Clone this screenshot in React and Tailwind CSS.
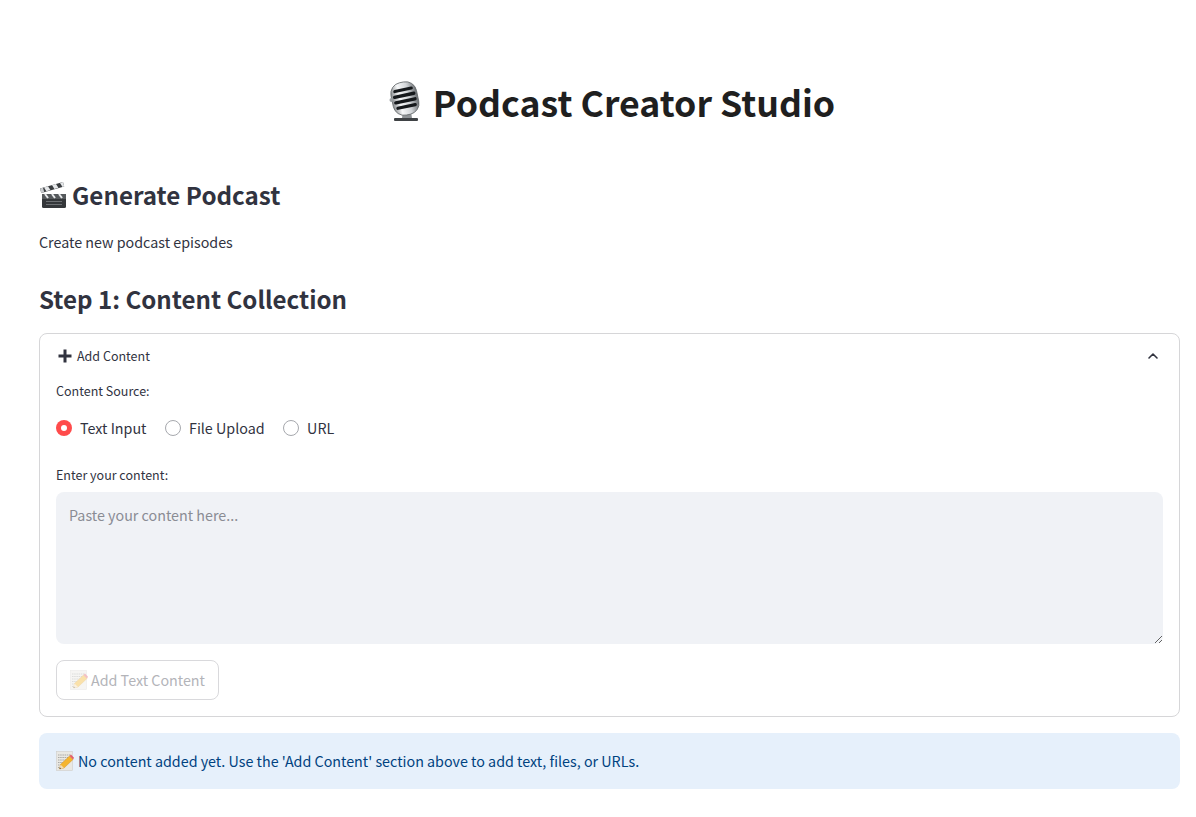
import React from 'react';
import { ChevronUp } from 'lucide-react';

const font = { fontFamily: '"Noto Sans CJK SC", "Noto Sans", sans-serif' };

const MicIcon = () => (
  <svg width="32" height="42" viewBox="0 0 32 42" className="shrink-0">
    <defs>
      <linearGradient id="micBody" x1="0" y1="0" x2="1" y2="0">
        <stop offset="0" stopColor="#8a8d90" />
        <stop offset="0.3" stopColor="#f7f8f9" />
        <stop offset="0.65" stopColor="#d2d5d8" />
        <stop offset="1" stopColor="#6a6e72" />
      </linearGradient>
    </defs>
    <rect x="5" y="37" width="24" height="3" rx="1" fill="#3f4245" />
    <path d="M14 31h8l1 6H13Z" fill="#8f9396" />
    <g transform="rotate(-12 16 18)">
      <rect x="3" y="1" width="26" height="33" rx="11" fill="url(#micBody)" stroke="#64686b" strokeWidth="0.8" />
      <rect x="6" y="7" width="20" height="3.2" rx="1.6" fill="#15181b" />
      <rect x="4.5" y="12.5" width="23" height="3.4" rx="1.7" fill="#15181b" />
      <rect x="4.5" y="18.2" width="23" height="3.4" rx="1.7" fill="#15181b" />
      <rect x="5.5" y="24" width="21" height="3.2" rx="1.6" fill="#15181b" />
    </g>
    <circle cx="2.5" cy="19" r="2" fill="#9a9ea1" />
  </svg>
);

const ClapperIcon = () => (
  <svg width="28" height="28" viewBox="0 0 28 28" className="shrink-0">
    <rect x="3" y="13" width="24" height="14" rx="1.5" fill="#34373a" />
    <rect x="3" y="13" width="24" height="5" fill="#55595c" />
    <path d="M7 20.5h16M7 23.5h16" stroke="#6d7073" strokeWidth="1" />
    <path d="M1 7.5 24 1l1.2 4.4L2.3 12Z" fill="#3a3d40" />
    <path d="M5 6.4 9 5.2l2.4 3.8-4 1.2ZM13 4.1l4-1.1 2.4 3.8-4 1.1ZM21 1.9l3-.9 1.2 4.4-1.7.5Z" fill="#e6e8ea" />
    <path d="M1 7.5 2.3 12l3-.8L4 6.7Z" fill="#c9cccf" />
    <path d="M6 13l3 4M13 13l3 4M20 13l3 4" stroke="#e6e8ea" strokeWidth="2" />
  </svg>
);

const MemoIcon = ({ className }) => (
  <svg width="18" height="20" viewBox="0 0 18 20" className={`shrink-0 ${className || ''}`}>
    <rect x="0.5" y="0.5" width="16" height="19" fill="#e9e8e3" stroke="#cfcec8" strokeWidth="0.6" />
    <path d="M2 4h13M2 6.5h13M2 9h9M2 11.5h6M2 14h4M2 16.5h2" stroke="#a9a9a6" strokeWidth="1" strokeDasharray="1.5 0.7" />
    <path d="M3.5 18 4.5 13.5 13.5 5 17 8.5 8 17Z" fill="#f5b52e" stroke="#c98a18" strokeWidth="0.4" />
    <path d="M13.5 5 15 3.5 18 6.8 17 8.5Z" fill="#e2606a" />
    <path d="M3.5 18 4.5 13.5 8 17Z" fill="#f3dcb4" />
    <path d="M3.5 18 3.9 16.4 5.1 17.6Z" fill="#333" />
  </svg>
);

const Radio = ({ label, checked }) => (
  <label className="flex items-center gap-2 text-[14.3px] text-[#31333f] leading-6">
    {checked ? (
      <span className="w-4 h-4 rounded-full bg-[#ff4b4b] flex items-center justify-center">
        <span className="w-1.5 h-1.5 rounded-full bg-white" />
      </span>
    ) : (
      <span className="w-4 h-4 rounded-full border border-[#a6a8ad] bg-white" />
    )}
    {label}
  </label>
);

export default function App() {
  return (
    <div className="min-h-screen bg-white pl-[39px] pr-4 pt-[75px] text-[#31333f]" style={font}>
      <h1 className="flex items-center justify-center gap-[12px] pl-[5px] text-[35.7px] leading-[54px] font-bold text-[#1f1f1f] h-[54px]">
        <MicIcon />
        Podcast Creator Studio
      </h1>

      <h2 className="flex items-center gap-[5px] mt-[48px] text-[24.2px] leading-9 font-semibold">
        <ClapperIcon />
        Generate Podcast
      </h2>
      <p className="mt-[17px] text-[14.3px] leading-6">Create new podcast episodes</p>
      <h3 className="mt-[27px] text-[24.1px] leading-9 font-semibold">Step 1: Content Collection</h3>

      <section className="mt-[16px] border border-[#d6d6d8] rounded-lg h-[384px] px-4">
        <div className="flex items-center justify-between h-11 pl-0.5 pr-0.5">
          <span className="flex items-center gap-[5px] text-[12.5px]">
            <svg width="14" height="14" viewBox="0 0 14 14" className="text-[#31333f]">
              <path d="M7 0.5v13M0.5 7h13" stroke="currentColor" strokeWidth="3" />
            </svg>
            Add Content
          </span>
          <ChevronUp size={16} strokeWidth={2.4} />
        </div>
        <p className="text-[12.5px] leading-[26px]">Content Source:</p>
        <div className="flex gap-[18.5px] mt-[12px]">
          <Radio label="Text Input" checked />
          <Radio label="File Upload" />
          <Radio label="URL" />
        </div>
        <p className="mt-[22px] text-[12.5px] leading-[26px]">Enter your content:</p>
        <textarea
          placeholder="Paste your content here..."
          className="block w-full h-[152px] mt-[4px] rounded-lg bg-[#f0f2f6] px-[13px] py-[11px] text-[14.3px] leading-6 outline-none placeholder:text-[#8a8c94]"
        />
        <button
          disabled
          className="flex items-center gap-[3px] mt-4 h-10 px-[13px] border border-[#d9d9dc] rounded-lg text-[14.3px] text-[#b3b4b9]"
        >
          <MemoIcon className="opacity-40" />
          Add Text Content
        </button>
      </section>

      <div className="flex items-center gap-[4px] mt-4 h-14 px-[17px] rounded-lg bg-[#e6f0fb] text-[14.3px] text-[#004280]">
        <MemoIcon />
        No content added yet. Use the 'Add Content' section above to add text, files, or URLs.
      </div>
    </div>
  );
}
